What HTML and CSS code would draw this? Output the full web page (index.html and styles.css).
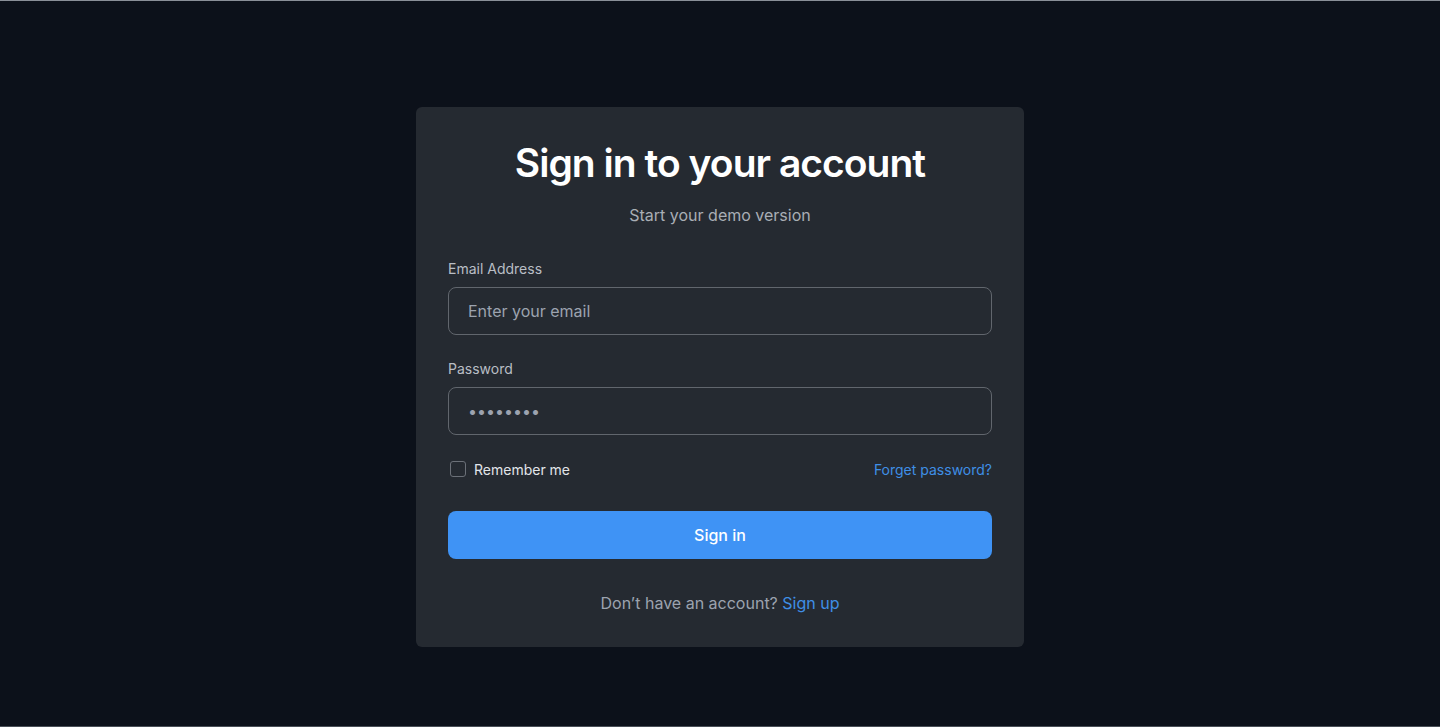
FILE: index.html
```html
<!DOCTYPE html>
<html lang="en">
<head>
  <meta charset="UTF-8" />
  <meta name="viewport" content="width=device-width, initial-scale=1.0"/>
  <title>Sign in</title>
  <link rel="stylesheet" href="styles.css">
</head>
<body>
  <main class="page">
    <form class="card" onsubmit="return false;">
      <h1 class="title">Sign in to your account</h1>
      <p class="subtitle">Start your demo version</p>

      <div class="field">
        <label for="email">Email Address</label>
        <input type="email" id="email" placeholder="Enter your email" />
      </div>

      <div class="field">
        <label for="password">Password</label>
        <input type="password" id="password" value="password" />
      </div>

      <div class="options">
        <label class="remember">
          <input type="checkbox" />
          <span>Remember me</span>
        </label>
        <a href="#" class="link">Forget password?</a>
      </div>

      <button type="submit" class="submit">Sign in</button>

      <p class="signup">Don’t have an account? <a href="#" class="link">Sign up</a></p>
    </form>
  </main>
</body>
</html>
```

FILE: styles.css
```css
* {
  box-sizing: border-box;
}

body {
  margin: 0;
  font-family: 'Inter', 'Noto Sans', sans-serif;
  background: #0c111a;
  color: #fff;
}

.page {
  height: 727px;
  border-top: 1px solid #8a9098;
  border-bottom: 1px solid #4a5058;
  display: flex;
  justify-content: center;
  padding-top: 106px;
}

.card {
  width: 608px;
  height: 540px;
  background: #252a31;
  border-radius: 6px;
  padding: 32px;
}

.title {
  margin: 0;
  font-size: 39px;
  line-height: 48px;
  font-weight: 600;
  letter-spacing: -0.025em;
  text-align: center;
}

.subtitle {
  margin: 16px 0 32px;
  font-size: 16px;
  line-height: 24px;
  color: #a9aeb5;
  text-align: center;
}

.field {
  margin-bottom: 24px;
}

.field label {
  display: block;
  font-size: 14px;
  line-height: 20px;
  color: #b9bec5;
  margin-bottom: 8px;
}

.field input {
  width: 100%;
  height: 48px;
  padding: 0 19px;
  background: transparent;
  border: 1px solid #61666d;
  border-radius: 8px;
  font-family: inherit;
  font-size: 16px;
  color: #9ca3af;
  outline: none;
}

.field input::placeholder {
  color: #9ca3af;
}

.options {
  display: flex;
  justify-content: space-between;
  align-items: center;
  height: 20px;
  margin-bottom: 32px;
}

.remember {
  display: flex;
  align-items: center;
  gap: 8px;
  font-size: 14px;
  color: #e2e5e9;
  padding-left: 2px;
}

.remember input {
  appearance: none;
  margin: 0;
  width: 16px;
  height: 16px;
  border: 1.5px solid #6b7078;
  border-radius: 3px;
  background: transparent;
}

.link {
  color: #3f8fe6;
  text-decoration: none;
}

.options .link {
  font-size: 14px;
}

.submit {
  display: block;
  width: 100%;
  height: 48px;
  border: none;
  border-radius: 8px;
  background: #3f93f5;
  color: #fff;
  font-family: inherit;
  font-size: 16px;
  font-weight: 500;
  cursor: pointer;
}

.signup {
  margin: 32px 0 0;
  font-size: 16px;
  line-height: 24px;
  color: #9ca3af;
  text-align: center;
}
```
